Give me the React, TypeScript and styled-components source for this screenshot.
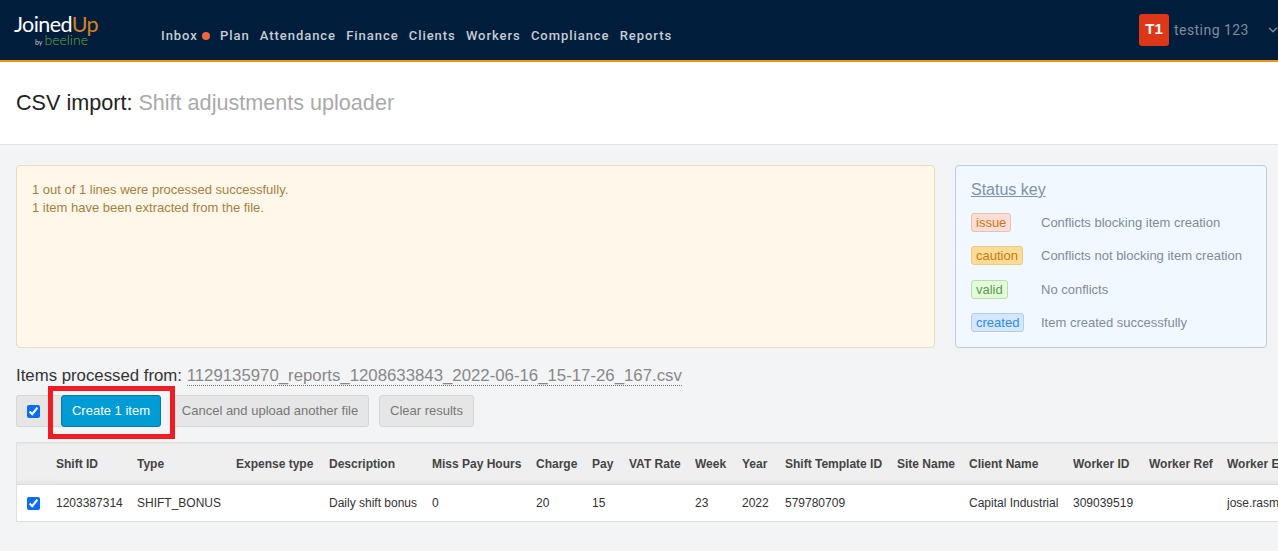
import React from 'react';
import styled, { createGlobalStyle } from 'styled-components';
import { ChevronDown } from 'lucide-react';

const GlobalStyle = createGlobalStyle`
  html, body {
    margin: 0;
    padding: 0;
    background: #f3f4f6;
    font-family: "Liberation Sans", Arial, sans-serif;
    overflow: hidden;
  }
`;

const Page = styled.div`
  position: relative;
  width: 1278px;
  height: 551px;
  overflow: hidden;
`;

const TopBar = styled.header`
  display: flex;
  align-items: stretch;
  height: 60px;
  background: #001e3c;
  border-bottom: 2px solid #ee9512;
`;

const Logo = styled.div`
  width: 161px;
  padding: 12px 0 0 14px;
  box-sizing: border-box;
  flex: none;
`;

const LogoMark = styled.div`
  font-family: "Lato", sans-serif;
  font-size: 21.5px;
  line-height: 24px;
  letter-spacing: -0.6px;
  color: #fff;

  span {
    color: #d5801f;
  }
`;

const LogoSub = styled.div`
  display: flex;
  align-items: baseline;
  gap: 2px;
  padding-left: 21px;
  margin-top: -2px;
  font-family: "Lato", sans-serif;
  font-size: 7px;
  line-height: 12px;
  color: #c9ced4;

  b {
    font-size: 14px;
    font-weight: 300;
    color: #66a83f;
  }
`;

const Nav = styled.nav`
  display: flex;
  align-items: center;
  gap: 10.2px;
  padding-top: 11px;
  flex: 1;
`;

const NavItem = styled.a`
  display: flex;
  align-items: center;
  gap: 4px;
  font-family: "Roboto", sans-serif;
  font-size: 13px;
  font-weight: 500;
  letter-spacing: 0.95px;
  color: #c6ccd4;
`;

const Dot = styled.i`
  width: 8px;
  height: 8px;
  border-radius: 50%;
  background: #f0643c;
`;

const UserMenu = styled.div`
  display: flex;
  align-items: center;
  align-self: flex-start;
  margin-top: 14px;
  height: 32px;
  width: 139px;
  flex: none;
`;

const Avatar = styled.div`
  width: 30px;
  height: 32px;
  flex: none;
  border-radius: 3px;
  background: #de3618;
  color: #fff;
  font-size: 15px;
  font-weight: 700;
  display: flex;
  align-items: center;
  justify-content: center;
  padding-bottom: 3px;
  box-sizing: border-box;
`;

const UserName = styled.span`
  margin-left: 5px;
  font-family: "Roboto", sans-serif;
  font-size: 14px;
  letter-spacing: 0.45px;
  color: #7e8b99;
  width: 92px;
  flex: none;
`;

const Caret = styled(ChevronDown)`
  color: #7e8b99;
  flex: none;
`;

const TitleBand = styled.div`
  height: 82px;
  background: #fff;
  border-bottom: 1px solid #e3e4e6;
  display: flex;
  align-items: center;
  padding-left: 16px;
`;

const Title = styled.h1`
  margin: 0;
  font-size: 21.6px;
  font-weight: 400;
  color: #222;

  span {
    color: #aaa;
  }
`;

const Content = styled.main`
  padding: 20px 0 0 16px;
`;

const TopRow = styled.div`
  display: flex;
  gap: 20px;
  height: 183px;
`;

const Notice = styled.div`
  width: 919px;
  box-sizing: border-box;
  padding: 15px;
  background: #fff8ea;
  border: 1px solid #e9dcbd;
  border-radius: 4px;
  font-size: 13px;
  line-height: 18px;
  color: #a5803f;
`;

const KeyPanel = styled.aside`
  width: 312px;
  box-sizing: border-box;
  padding: 14px 15px;
  background: #f1f8ff;
  border: 1px solid #b9cde0;
  border-radius: 4px;
`;

const KeyTitle = styled.div`
  font-size: 16px;
  line-height: 19px;
  color: #7d93a8;
  text-decoration: underline;
  margin-bottom: 14px;
`;

const KeyRow = styled.div`
  display: flex;
  align-items: center;
  height: 19px;
  margin-bottom: 14.4px;
  font-size: 13px;
  color: #7f8c9b;
`;

const KeyBadgeCell = styled.div`
  width: 70px;
  flex: none;
`;

const badgeColours = {
  issue: { bg: '#ffdcd7', border: '#e2c5aa', fg: '#c47a12' },
  caution: { bg: '#ffdc96', border: '#e6c98e', fg: '#c47a12' },
  valid: { bg: '#e3fbd9', border: '#b6e0a8', fg: '#5c9a52' },
  created: { bg: '#d5e6ff', border: '#b1cdea', fg: '#2e8bea' },
};

type BadgeKind = keyof typeof badgeColours;

const Badge = styled.span<{ $kind: BadgeKind }>`
  display: inline-block;
  height: 19px;
  line-height: 17px;
  box-sizing: border-box;
  padding: 0 4px;
  font-size: 13px;
  border-radius: 3px;
  background: ${p => badgeColours[p.$kind].bg};
  border: 1px solid ${p => badgeColours[p.$kind].border};
  color: ${p => badgeColours[p.$kind].fg};
`;

const FromLine = styled.div`
  margin-top: 18px;
  font-size: 16.8px;
  line-height: 19px;
  color: #333;
`;

const FileName = styled.span`
  color: #888;
  border-bottom: 1px dotted #777;
`;

const Toolbar = styled.div`
  display: flex;
  align-items: center;
  margin-top: 10px;
  height: 32px;
`;

const SelectAll = styled.label`
  display: flex;
  align-items: center;
  width: 45px;
  height: 32px;
  box-sizing: border-box;
  padding-left: 10px;
  background: #e6e6e6;
  border: 1px solid #d6d6d6;
  border-radius: 3px 0 0 3px;
  border-right: 0;
`;

const Check = styled.input.attrs({ type: 'checkbox', defaultChecked: true })`
  width: 13px;
  height: 13px;
  margin: 0;
  accent-color: #0b6bf2;
`;

const Button = styled.button<{ $primary?: boolean }>`
  height: 32px;
  box-sizing: border-box;
  padding: 0 0 2px;
  font-family: inherit;
  font-size: 13px;
  border-radius: 3px;
  background: ${p => (p.$primary ? '#009cd6' : '#e6e6e6')};
  border: 1px solid ${p => (p.$primary ? '#0a7a96' : '#d6d6d6')};
  color: ${p => (p.$primary ? '#fff' : '#777')};
`;

const CreateButton = styled(Button)`
  width: 100px;
`;

const CancelButton = styled(Button)`
  margin-left: 10px;
  width: 198px;
`;

const ClearButton = styled(Button)`
  margin-left: 10px;
  width: 95px;
`;

const Callout = styled.div`
  position: absolute;
  left: 48px;
  top: 386px;
  width: 127px;
  height: 53px;
  box-sizing: border-box;
  border: 5px solid #ee1c25;
  pointer-events: none;
`;

const Table = styled.table`
  margin-top: 15px;
  width: 1400px;
  table-layout: fixed;
  border-collapse: collapse;
  font-size: 12px;
  color: #333;
`;

const HeadRow = styled.tr`
  height: 42px;
  background: linear-gradient(#efefef 85%, #e6e6e6);
  border: 1px solid #dfdfdf;
  border-bottom: 1px solid #dcdcdc;
`;

const HeadCell = styled.th`
  padding: 0;
  text-align: left;
  font-weight: 700;
  color: #444;
  white-space: nowrap;
  overflow: hidden;
`;

const BodyRow = styled.tr`
  height: 37px;
  background: #fff;
  border: 1px solid #dfdfdf;
`;

const BodyCell = styled.td`
  padding: 0;
  white-space: nowrap;
  overflow: hidden;
`;

const RowCheckCell = styled(BodyCell)`
  padding: 4px 0 0 10px;
`;

const columns: [string, string, number][] = [
  ['Shift ID', '1203387314', 81],
  ['Type', 'SHIFT_BONUS', 99],
  ['Expense type', '', 93],
  ['Description', 'Daily shift bonus', 103],
  ['Miss Pay Hours', '0', 104],
  ['Charge', '20', 56],
  ['Pay', '15', 37],
  ['VAT Rate', '', 66],
  ['Week', '23', 47],
  ['Year', '2022', 43],
  ['Shift Template ID', '579780709', 112],
  ['Site Name', '', 72],
  ['Client Name', 'Capital Industrial', 104],
  ['Worker ID', '309039519', 76],
  ['Worker Ref', '', 78],
  ['Worker Email', 'jose.rasmussen@example.com', 189],
];

const statusKey: [BadgeKind, string][] = [
  ['issue', 'Conflicts blocking item creation'],
  ['caution', 'Conflicts not blocking item creation'],
  ['valid', 'No conflicts'],
  ['created', 'Item created successfully'],
];

const navItems = ['Plan', 'Attendance', 'Finance', 'Clients', 'Workers', 'Compliance', 'Reports'];

const App: React.FC = () => {
  return (
    <Page>
      <GlobalStyle />
      <TopBar>
        <Logo>
          <LogoMark>Joined<span>Up</span></LogoMark>
          <LogoSub><span>by</span><b>beeline</b></LogoSub>
        </Logo>
        <Nav>
          <NavItem>Inbox <Dot /></NavItem>
          {navItems.map(item => (
            <NavItem key={item}>{item}</NavItem>
          ))}
        </Nav>
        <UserMenu>
          <Avatar>T1</Avatar>
          <UserName>testing 123</UserName>
          <Caret size={14} strokeWidth={2.5} />
        </UserMenu>
      </TopBar>

      <TitleBand>
        <Title>CSV import: <span>Shift adjustments uploader</span></Title>
      </TitleBand>

      <Content>
        <TopRow>
          <Notice>
            1 out of 1 lines were processed successfully.<br />
            1 item have been extracted from the file.
          </Notice>
          <KeyPanel>
            <KeyTitle>Status key</KeyTitle>
            {statusKey.map(([kind, text]) => (
              <KeyRow key={kind}>
                <KeyBadgeCell><Badge $kind={kind}>{kind}</Badge></KeyBadgeCell>
                {text}
              </KeyRow>
            ))}
          </KeyPanel>
        </TopRow>

        <FromLine>
          Items processed from: <FileName>1129135970_reports_1208633843_2022-06-16_15-17-26_167.csv</FileName>
        </FromLine>

        <Toolbar>
          <SelectAll><Check /></SelectAll>
          <CreateButton $primary>Create 1 item</CreateButton>
          <CancelButton>Cancel and upload another file</CancelButton>
          <ClearButton>Clear results</ClearButton>
        </Toolbar>

        <Table>
          <colgroup>
            <col width={39.5} />
            {columns.map(([name, , width]) => (
              <col key={name} width={width} />
            ))}
          </colgroup>
          <thead>
            <HeadRow>
              <HeadCell />
              {columns.map(([name]) => (
                <HeadCell key={name}>{name}</HeadCell>
              ))}
            </HeadRow>
          </thead>
          <tbody>
            <BodyRow>
              <RowCheckCell><Check /></RowCheckCell>
              {columns.map(([name, value]) => (
                <BodyCell key={name}>{value}</BodyCell>
              ))}
            </BodyRow>
          </tbody>
        </Table>
      </Content>
      <Callout />
    </Page>
  );
};

export default App;
